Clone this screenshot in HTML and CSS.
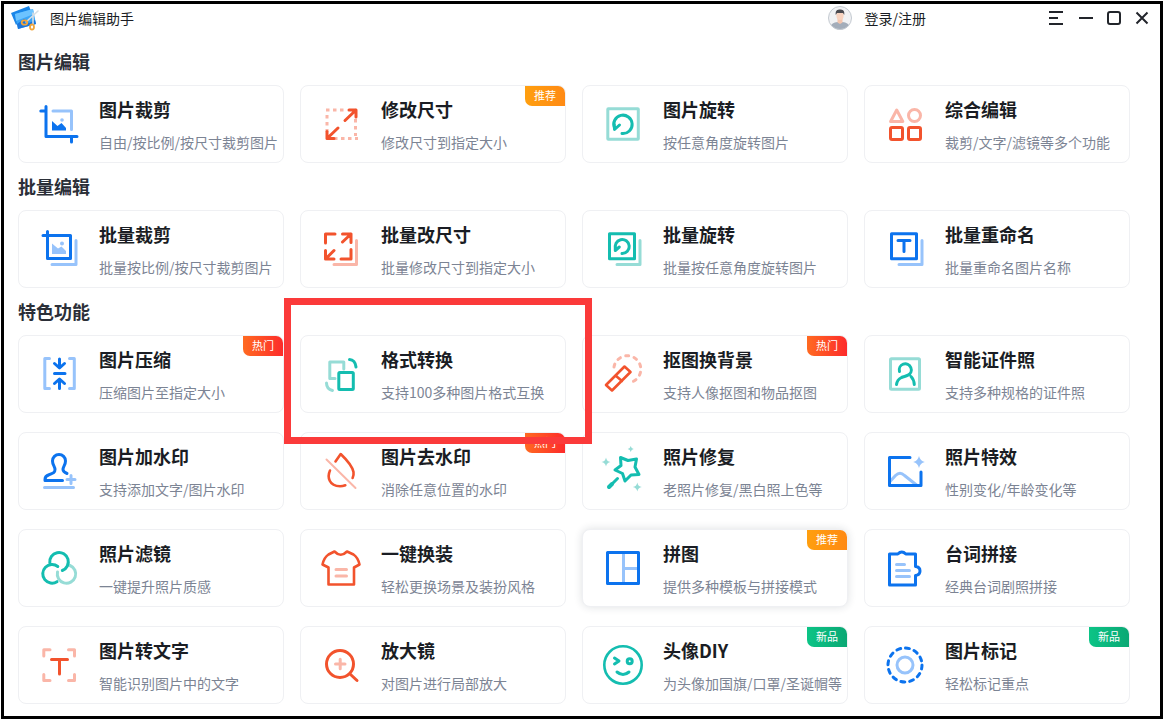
FILE: index.html
```html
<!DOCTYPE html>
<html lang="zh-CN">
<head>
<meta charset="utf-8">
<meta name="viewport" content="width=device-width, initial-scale=1">
<title>图片编辑助手</title>
<link rel="stylesheet" href="styles.css">
</head>
<body>
<div class="window">
  <header class="titlebar">
    <svg class="logo" viewBox="0 0 28 26" aria-hidden="true">
      <path d="M0 8 18 1l2 5L5 20z" fill="#1a86e8"/>
      <path d="M4 9 22 4l3 15L7 24z" fill="#3aa5f7"/>
      <path d="M4 9 22 4l1 5L5 16z" fill="#6cc3ff"/>
      <path d="M6 19l7-5 5 4 6-3 1 4L7 24z" fill="#1b76dc"/>
      <path d="M27 6 15 17M22 8v12" stroke="#d5dde3" stroke-width="1.6" stroke-linecap="round"/>
      <ellipse cx="13.500" cy="17.500" rx="2.800" ry="2.200" fill="none" stroke="#f2a53a" stroke-width="1.800"/>
      <ellipse cx="21" cy="22" rx="2" ry="2.600" fill="none" stroke="#f2a53a" stroke-width="1.800"/>
    </svg>
    <h1 class="app-name">图片编辑助手</h1>
    <a class="user" href="#login">
      <svg class="avatar" viewBox="0 0 24 24" aria-hidden="true">
        <clipPath id="face"><circle cx="12" cy="12" r="11.500"/></clipPath>
        <circle cx="12" cy="12" r="11.500" fill="#f1f2f4"/>
        <g clip-path="url(#face)">
          <path d="M2 24c0-7 4-8 10-8s10 1 10 8z" fill="#a3adba"/>
          <path d="M9.500 12h5v4.500L12 18l-2.500-1.500z" fill="#f3c5ae"/>
          <ellipse cx="12" cy="9.500" rx="3.600" ry="4.500" fill="#f8d3c0"/>
          <path d="M7.800 9C7 4.500 9.500 3.500 12 3.500s5 1 4.200 5.500L15 7H9z" fill="#4a4a50"/>
        </g>
        <circle cx="12" cy="12" r="11.500" fill="none" stroke="#c3c9d0"/>
      </svg>
      <span>登录/注册</span>
    </a>
    <div class="controls">
      <button class="control control-menu" type="button" aria-label="菜单"><svg viewBox="0 0 14 14"><path d="M0 1h14M0 7h9M0 13h14"/></svg></button>
      <button class="control" type="button" aria-label="最小化"><svg viewBox="0 0 14 14"><path d="M0 7h14"/></svg></button>
      <button class="control" type="button" aria-label="最大化"><svg viewBox="0 0 14 14"><rect x="1" y="1" width="12" height="12" rx="2"/></svg></button>
      <button class="control" type="button" aria-label="关闭"><svg viewBox="0 0 14 14"><path d="M1.500 1.500l11 11M12.500 1.500l-11 11"/></svg></button>
    </div>
  </header>

  <main class="content">
    <section class="group">
      <h2 class="group-title">图片编辑</h2>
      <div class="grid">
        <a class="card" href="#crop">
          <svg class="icon blue" viewBox="0 0 40 40"><path class="soft" d="M14 7h18.500v18.500"/><path d="M1.800 7H7M7 2.500V32.500H38M32.500 32.500v5.500"/><path class="fill" d="M13 17l5.500 5 4-3 4.500 5v2.500H13z"/><circle class="fill-soft" cx="23" cy="16" r="1.800"/></svg>
          <div class="card-text"><h3 class="card-title">图片裁剪</h3><p class="card-desc">自由/按比例/按尺寸裁剪图片</p></div>
        </a>
        <a class="card" href="#resize">
          <svg class="icon red" viewBox="0 0 40 40"><path class="soft butt" stroke-dasharray="3.500 3.500" d="M5 6h21M6 11v17M13 34.500h24M34.500 15v17"/><path d="M28 6h7v7M35 6 24 16.500M6 27.500v7h7M6 34.500 17 24"/></svg>
          <div class="card-text"><h3 class="card-title">修改尺寸</h3><p class="card-desc">修改尺寸到指定大小</p></div>
          <span class="badge badge-pick">推荐</span>
        </a>
        <a class="card" href="#rotate">
          <svg class="icon teal" viewBox="0 0 40 40"><rect class="soft" x="4.800" y="4.800" width="30.500" height="30.500" rx=".5"/><path d="M19 29.500A9.200 9.200 0 1 0 11.500 24M11.300 20l.2 5.500 5-4.500"/></svg>
          <div class="card-text"><h3 class="card-title">图片旋转</h3><p class="card-desc">按任意角度旋转图片</p></div>
        </a>
        <a class="card" href="#edit">
          <svg class="icon red" viewBox="0 0 40 40"><path class="soft" d="M11.700 6 17.800 17.500H5.600z"/><circle class="soft" cx="29.500" cy="11.500" r="6"/><rect x="5.500" y="23.500" width="12" height="12" rx="1.500"/><rect x="23.500" y="23.500" width="12" height="12" rx="1.500"/></svg>
          <div class="card-text"><h3 class="card-title">综合编辑</h3><p class="card-desc">裁剪/文字/滤镜等多个功能</p></div>
        </a>
      </div>
    </section>

    <section class="group">
      <h2 class="group-title">批量编辑</h2>
      <div class="grid">
        <a class="card" href="#batch-crop">
          <svg class="icon blue" viewBox="0 0 40 40"><path class="soft" d="M37 11.500v24H13"/><path d="M4 6.500h27.500v23H8.500V2.500"/><path class="fill-soft" d="M13 14.500l6 5 3.500-2 4.500 4.500v3H13z"/><circle class="fill-soft" cx="23" cy="14.500" r="2"/></svg>
          <div class="card-text"><h3 class="card-title">批量裁剪</h3><p class="card-desc">批量按比例/按尺寸裁剪图片</p></div>
        </a>
        <a class="card" href="#batch-resize">
          <svg class="icon red" viewBox="0 0 40 40"><path class="soft" d="M35.500 11.500v24H13"/><path d="M14 5H4.500v9M30 20.500V30H20M21.500 5H30v8.500M30 5l-8.500 8M4.500 21.500V30H13M4.500 30l8.500-8.500"/></svg>
          <div class="card-text"><h3 class="card-title">批量改尺寸</h3><p class="card-desc">批量修改尺寸到指定大小</p></div>
        </a>
        <a class="card" href="#batch-rotate">
          <svg class="icon teal" viewBox="0 0 40 40"><path class="soft" d="M37 11.500v24H14"/><rect x="6.500" y="4.800" width="25" height="25"/><path d="M19 24.500A7 7 0 1 0 12.700 20M12.300 17.500v4l4-3.500"/></svg>
          <div class="card-text"><h3 class="card-title">批量旋转</h3><p class="card-desc">批量按任意角度旋转图片</p></div>
        </a>
        <a class="card" href="#batch-rename">
          <svg class="icon blue" viewBox="0 0 40 40"><path class="soft" d="M37 11.500v24H14"/><rect x="6.500" y="4.800" width="25" height="25"/><path d="M13 11.500h12M19 11.500v11"/></svg>
          <div class="card-text"><h3 class="card-title">批量重命名</h3><p class="card-desc">批量重命名图片名称</p></div>
        </a>
      </div>
    </section>

    <section class="group">
      <h2 class="group-title">特色功能</h2>
      <div class="grid">
        <a class="card" href="#compress">
          <svg class="icon blue" viewBox="0 0 40 40"><path class="soft" d="M10.500 4.500H5.800v30h4.700M30.500 4.500h4.800v30h-4.800"/><path d="M20.500 5v8.500M15.500 9.500l5 4.500 5-4.500M15.500 19.500h10.500M20.500 34.500V26M15.500 29.500l5-4.500 5 4.500"/></svg>
          <div class="card-text"><h3 class="card-title">图片压缩</h3><p class="card-desc">压缩图片至指定大小</p></div>
          <span class="badge badge-hot">热门</span>
        </a>
        <a class="card" href="#convert">
          <svg class="icon teal" viewBox="0 0 40 40"><path class="soft" d="M14 24.500H8.800V8h14v7M5.500 29c0 4 2 6.500 6 7.500"/><rect x="17.800" y="18.500" width="14.500" height="17" rx="1"/><path d="M28.500 5.500c3.500 0 6 3 6.500 7.500"/></svg>
          <div class="card-text"><h3 class="card-title">格式转换</h3><p class="card-desc">支持100多种图片格式互换</p></div>
          <span class="marker" aria-hidden="true"></span>
        </a>
        <a class="card" href="#cutout">
          <svg class="icon red" viewBox="0 0 40 40"><path class="soft" stroke-dasharray="3 5.600" d="M11 13A13.500 13.500 0 1 1 27 28.500"/><path class="mid" d="M3 31 21.500 12.500l6 5.500L9 36.500zM12.500 21.500l6.500 5.500"/></svg>
          <div class="card-text"><h3 class="card-title">抠图换背景</h3><p class="card-desc">支持人像抠图和物品抠图</p></div>
          <span class="badge badge-hot">热门</span>
        </a>
        <a class="card" href="#id-photo">
          <svg class="icon teal" viewBox="0 0 40 40"><rect class="soft" x="5.500" y="4.800" width="29" height="30.500" rx="1"/><path d="M14.500 17.500a6 6 0 1 1 8.500 3.700c-2 1-4 1.300-6.500 2.300C13.500 25 12 27 11.500 30.500M26 22.500c2 2 3 4.500 3.300 8"/></svg>
          <div class="card-text"><h3 class="card-title">智能证件照</h3><p class="card-desc">支持多种规格的证件照</p></div>
        </a>

        <a class="card" href="#watermark">
          <svg class="icon blue" viewBox="0 0 40 40"><path class="soft" d="M5.500 36.500h29M32 24.500v8M28 28.500h8"/><path d="M23.500 29.500H6v-1c0-3 1.500-4 4-4.800 4.500-1.400 6-2.200 6-5.200 0-3-2.500-4.500-2.500-8.500a6.500 6.500 0 0 1 13 0c0 4-2.500 5.500-2.500 8.500 0 2 1 2.800 4 4"/></svg>
          <div class="card-text"><h3 class="card-title">图片加水印</h3><p class="card-desc">支持添加文字/图片水印</p></div>
        </a>
        <a class="card" href="#remove-watermark">
          <svg class="icon red" viewBox="0 0 40 40"><path class="soft thin" d="M5.500 8.500 34.500 37"/><path class="mid" d="M14.500 10.500 19.700 3C27 10 31.500 16 32.500 21c.3 2 0 4-.9 6M9 19.500C6 26 8 35 19 35.300c2 0 3.500-.3 5.300-1"/></svg>
          <div class="card-text"><h3 class="card-title">图片去水印</h3><p class="card-desc">消除任意位置的水印</p></div>
          <span class="badge badge-hot">热门</span>
        </a>
        <a class="card" href="#restore">
          <svg class="icon teal" viewBox="0 0 40 40"><path d="M17.500 6.500 25 9.500l8.500-1.500-1.500 8 4 7.500-8 .5-6 6-2.500-7.500-7.500-3.500 6-4.500z"/><path d="M14.500 27.500 9 33"/><path class="thick" d="M9 33 6 36"/><path class="fill-soft" d="M27.700-5q.5 2.500 3 3-2.500.5-3 3-.5-2.500-3-3 2.500-.5 3-3zM3 6.500q.7 4 4.500 4.500-3.800.7-4.500 4.500-.7-3.800-4.500-4.500 3.800-.5 4.500-4.500zM34.300 31.500q.7 4 4.500 4.500-3.800.7-4.500 4.500-.7-3.800-4.500-4.500 3.800-.5 4.500-4.500z"/></svg>
          <div class="card-text"><h3 class="card-title">照片修复</h3><p class="card-desc">老照片修复/黑白照上色等</p></div>
        </a>
        <a class="card" href="#effects">
          <svg class="icon blue" viewBox="0 0 40 40"><path class="soft" d="M5 30.500l5.500-6q4.500-4.500 9 0L31.500 34"/><path d="M25 6.500H4.500v28H36V21"/><path class="fill-soft" d="M34 5q1.200 5 5.800 6-4.600 1-5.800 6-1.200-5-5.800-6 4.600-1 5.800-6z"/></svg>
          <div class="card-text"><h3 class="card-title">照片特效</h3><p class="card-desc">性别变化/年龄变化等</p></div>
        </a>

        <a class="card" href="#filter">
          <svg class="icon teal" viewBox="0 0 40 40"><path class="soft" d="M18.500 24A9.200 9.200 0 1 0 31 17.500"/><path d="M10.800 15a9.300 9.300 0 1 1 12.500 7.500M18.800 18.500A9.300 9.300 0 1 0 18 33.700"/></svg>
          <div class="card-text"><h3 class="card-title">照片滤镜</h3><p class="card-desc">一键提升照片质感</p></div>
        </a>
        <a class="card" href="#outfit">
          <svg class="icon red" viewBox="0 0 40 40"><path class="soft" d="M15 21.500h10.500M15 28h10.500"/><path class="mid" d="M13.500 3.500q6.200 6.500 12.500 0l6.500 3c3 2 5 5.500 6 10L33 19.500v17H7.500v-17L1.500 16.500c1-4.500 3-8 6-10z"/></svg>
          <div class="card-text"><h3 class="card-title">一键换装</h3><p class="card-desc">轻松更换场景及装扮风格</p></div>
        </a>
        <a class="card card-active" href="#collage">
          <svg class="icon blue" viewBox="0 0 40 40"><path class="soft" d="M20.500 6v28M20.500 20.500H34"/><rect x="4.500" y="4.500" width="31" height="31"/></svg>
          <div class="card-text"><h3 class="card-title">拼图</h3><p class="card-desc">提供多种模板与拼接模式</p></div>
          <span class="badge badge-pick">推荐</span>
        </a>
        <a class="card" href="#subtitle">
          <svg class="icon blue" viewBox="0 0 40 40"><path class="soft" d="M11.500 16.500h8M11.500 22.500h13M11.500 28.500h13"/><path d="M4.500 6h8.300q4-4 8 0h9.700v12.500q4.500.5 4.500 4.500t-4.500 4.500v9.500h-26z"/></svg>
          <div class="card-text"><h3 class="card-title">台词拼接</h3><p class="card-desc">经典台词剧照拼接</p></div>
        </a>

        <a class="card" href="#ocr">
          <svg class="icon red" viewBox="0 0 40 40"><path class="soft" d="M11 4.800H4.800V11M29.500 4.800h6V11M4.800 29.500v6H11M35.500 29.500v6h-6"/><path d="M12.500 14.500h16M20.500 14.500V29"/></svg>
          <div class="card-text"><h3 class="card-title">图片转文字</h3><p class="card-desc">智能识别图片中的文字</p></div>
        </a>
        <a class="card" href="#magnifier">
          <svg class="icon red" viewBox="0 0 40 40"><path class="soft" d="M14.500 19h9.500M19.200 14.200v9.500"/><circle cx="19" cy="19" r="13.500"/><path d="M29 29l7 6.500"/></svg>
          <div class="card-text"><h3 class="card-title">放大镜</h3><p class="card-desc">对图片进行局部放大</p></div>
        </a>
        <a class="card" href="#avatar-diy">
          <svg class="icon teal" viewBox="0 0 40 40"><circle class="mid" cx="20" cy="20" r="18.700"/><path d="M11.500 13l4.500 3-4.500 3M14 27q6 5 12 0"/><circle cx="26.700" cy="16.200" r="2.500"/></svg>
          <div class="card-text"><h3 class="card-title">头像DIY</h3><p class="card-desc">为头像加国旗/口罩/圣诞帽等</p></div>
          <span class="badge badge-new">新品</span>
        </a>
        <a class="card" href="#annotate">
          <svg class="icon blue" viewBox="0 0 40 40"><circle class="soft" cx="20" cy="20" r="8"/><circle cx="20" cy="20" r="17" stroke-dasharray="4 4.900"/></svg>
          <div class="card-text"><h3 class="card-title">图片标记</h3><p class="card-desc">轻松标记重点</p></div>
          <span class="badge badge-new">新品</span>
        </a>
      </div>
    </section>
  </main>
</div>
</body>
</html>
```
FILE: styles.css
```css
*,
*::before,
*::after {
  box-sizing: border-box;
}

body {
  margin: 0;
  padding: 1px;
  min-height: 100vh;
  display: flex;
  background: #fff;
  color: #1a1d24;
  font-family: "Noto Sans CJK SC", sans-serif;
  font-size: 14px;
  line-height: 20px;
}

h1,
h2,
h3,
p {
  margin: 0;
}

a {
  color: inherit;
  text-decoration: none;
}

.window {
  flex: 1;
  border: 3px solid #000;
}

/* Title bar */
.titlebar {
  display: flex;
  align-items: center;
  height: 28px;
  padding: 0 4px 0 7px;
}

.logo {
  width: 28px;
  height: 26px;
  margin-right: 11px;
}

.app-name {
  font-size: 14px;
  font-weight: 400;
}

.user {
  display: flex;
  align-items: center;
  gap: 13px;
  margin-left: auto;
  margin-right: 116px;
}

.avatar {
  width: 24px;
  height: 24px;
}

.controls {
  display: flex;
}

.control {
  display: flex;
  align-items: center;
  justify-content: center;
  width: 28px;
  height: 28px;
  padding: 0;
  border: 0;
  background: none;
}

.control-menu {
  margin-right: 2px;
}

.control svg {
  width: 14px;
  height: 14px;
  fill: none;
  stroke: #22252b;
  stroke-width: 2;
}

/* Groups of tools */
.content {
  padding: 6px 30px 12px 14px;
}

.group {
  padding-top: 11px;
}

.group-title {
  margin-bottom: 12px;
  color: #2b2f38;
  font-size: 18px;
  font-weight: 700;
  line-height: 24px;
}

.grid {
  display: grid;
  grid-template-columns: repeat(4, minmax(0, 1fr));
  gap: 19px 16px;
}

.card {
  position: relative;
  display: flex;
  align-items: center;
  gap: 20px;
  padding: 10px 0 10px 20px;
  border: 1px solid #eff0f3;
  border-radius: 8px;
  background: #fff;
}

.card-active {
  box-shadow: 0 0 8px rgba(30, 40, 60, 0.14);
}

.card-title {
  margin-bottom: 10px;
  font-size: 18px;
  font-weight: 700;
  line-height: 26px;
}

.card-desc {
  color: #7c8494;
  white-space: nowrap;
}

/* Icons */
.icon {
  flex: none;
  width: 40px;
  height: 40px;
  overflow: visible;
  fill: none;
  stroke: var(--main);
  stroke-width: 3;
  stroke-linecap: round;
  stroke-linejoin: round;
}

.blue {
  --main: #0c73ee;
  --soft: #97c3fb;
}

.red {
  --main: #f2532d;
  --soft: #fab6a8;
}

.teal {
  --main: #14bdb0;
  --soft: #96dcd6;
}

.soft {
  stroke: var(--soft);
}

.butt {
  stroke-linecap: butt;
}

.fill {
  fill: var(--main);
  stroke: none;
}

.fill-soft {
  fill: var(--soft);
  stroke: none;
}

.thin {
  stroke-width: 2;
}

.mid {
  stroke-width: 2.6;
}

.thick {
  stroke-width: 4;
}

/* Corner badges */
.badge {
  position: absolute;
  top: 0;
  right: 0;
  width: 40px;
  height: 20px;
  border-radius: 0 7px 0 7px;
  color: #fff;
  font-size: 11px;
  line-height: 18px;
  text-align: center;
}

.badge-pick {
  background: linear-gradient(90deg, #ff9f0f, #ff8a14);
}

.badge-hot {
  background: linear-gradient(90deg, #ff6a21, #fd2b2b);
}

.badge-new {
  background: linear-gradient(90deg, #0cc486, #0ba874);
}

/* Highlight drawn round one card */
.marker {
  position: absolute;
  z-index: 1;
  inset: -38px -27px -32px -17px;
  border: 7px solid #fb3a3a;
  pointer-events: none;
}
```
